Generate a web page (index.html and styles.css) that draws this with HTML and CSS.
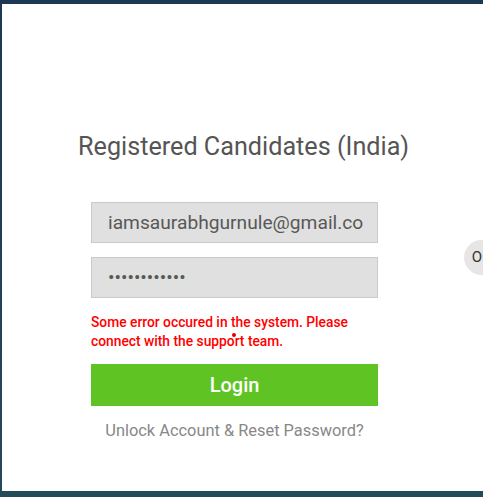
FILE: index.html
```html
<!DOCTYPE html>
<html>
<head>
<meta charset="utf-8">
<link rel="stylesheet" href="styles.css">
</head>
<body>
<div class="panel">
  <h2 class="title">Registered Candidates (India)</h2>
  <form class="form">
    <input class="field" type="text" value="iamsaurabhgurnule@gmail.com">
    <input class="field pass" type="password" value="password1234">
    <p class="error">Some error occured in the system. Please connect with the support team.<span class="dot"></span></p>
    <button class="login" type="button">Login</button>
    <a class="reset" href="#">Unlock Account &amp; Reset Password?</a>
  </form>
  <div class="or">OR</div>
</div>
</body>
</html>
```
FILE: styles.css
```css
html, body {
  margin: 0;
  padding: 0;
  height: 100%;
  overflow: hidden;
}
body {
  background: linear-gradient(180deg, #1d3853 0%, #213f57 50%, #244b58 100%);
  font-family: Roboto, "Liberation Sans", sans-serif;
}
.panel {
  position: relative;
  margin: 4px 0 0 2px;
  height: 487px;
  background: #fff;
  box-sizing: border-box;
  padding-top: 127px;
}
.title {
  margin: 0 0 0 76px;
  font-weight: 400;
  font-size: 25.2px;
  line-height: 32px;
  color: #555;
}
.form {
  margin: 39px 0 0 89px;
  width: 287px;
  display: flex;
  flex-direction: column;
  position: relative;
}
.field {
  box-sizing: border-box;
  width: 287px;
  height: 41px;
  margin: 0 0 14px 0;
  padding: 0 14px 0 16px;
  background: #e0e0e0;
  border: 1px solid #cacaca;
  font-family: Roboto, "Liberation Sans", sans-serif;
  font-size: 19.2px;
  color: #585858;
  outline: none;
}
.field.pass {
  margin-bottom: 0;
}
.error {
  margin: 15px 0 0 0;
  color: #f00;
  font-size: 13.8px;
  font-weight: 500;
  line-height: 19px;
  position: relative;
}
.dot {
  position: absolute;
  left: 141px;
  top: 20px;
  width: 4px;
  height: 4px;
  border-radius: 50%;
  background: #d00;
}
.login {
  margin-top: 13px;
  height: 42px;
  border: 0;
  background: #5fc423;
  color: #fff;
  font-family: Roboto, "Liberation Sans", sans-serif;
  font-size: 20px;
  font-weight: 500;
  padding: 0;
}
.reset {
  margin-top: 15px;
  text-align: center;
  color: #888;
  font-size: 16.4px;
  text-decoration: none;
  line-height: 20px;
}
.or {
  position: absolute;
  left: 462px;
  top: 236px;
  width: 35px;
  height: 35px;
  border-radius: 50%;
  background: #e6e6e6;
  color: #333;
  font-size: 15px;
  line-height: 35px;
  text-align: center;
}
```
